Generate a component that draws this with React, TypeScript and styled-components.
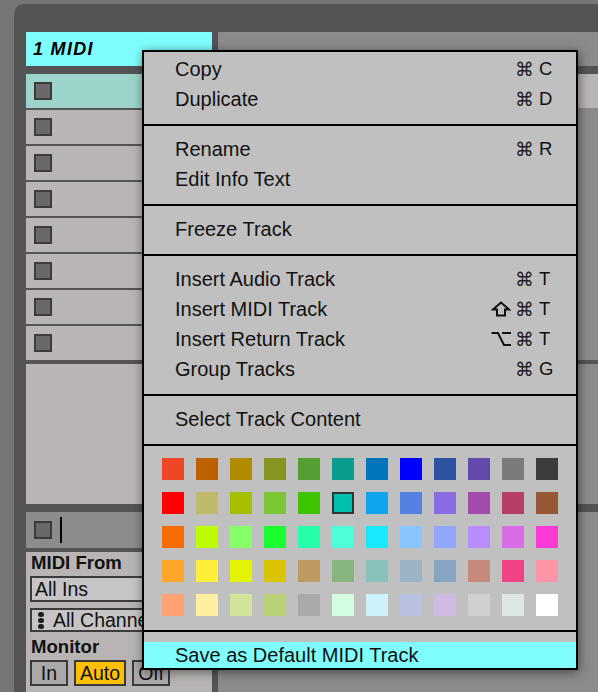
import React from "react";
import styled, { createGlobalStyle } from "styled-components";

const GlobalStyle = createGlobalStyle`
  html, body { margin: 0; padding: 0; background: #767676; }
  body { font-family: "Liberation Sans", Arial, sans-serif; }
  * { box-sizing: border-box; }
`;

const Screen = styled.div`
  position: relative;
  width: 598px;
  height: 692px;
  overflow: hidden;
  background: #767676;
  padding: 4px 0 0 14px;
`;

const Panel = styled.div`
  display: flex;
  gap: 6px;
  height: 100%;
  background: #545454;
  border-top-left-radius: 10px;
  padding: 28px 0 0 12px;
`;

const Column = styled.div<{ $width?: number }>`
  display: flex;
  flex-direction: column;
  ${(p) => (p.$width ? `width: ${p.$width}px; flex: none;` : "flex: 1;")}
`;

const TrackHeader = styled.div<{ $active?: boolean }>`
  height: 34px;
  flex: none;
  margin-bottom: 8px;
  background: ${(p) => (p.$active ? "#80fefe" : "#8b8b8b")};
  color: #000;
  font-weight: bold;
  font-style: italic;
  font-size: 18px;
  letter-spacing: 1.3px;
  line-height: 34px;
  padding-left: 7px;
`;

const SlotList = styled.div`
  display: flex;
  flex-direction: column;
  gap: 2px;
  flex: none;
`;

const Slot = styled.div<{ $selected?: boolean }>`
  height: 34px;
  flex: none;
  display: flex;
  align-items: center;
  padding-left: 8px;
  background: ${(p) => (p.$selected ? "#9dd4ca" : "#b9b5b4")};
`;

const SlotButton = styled.div`
  width: 18px;
  height: 18px;
  border: 2px solid #3b3b3b;
  background: #696969;
`;

const Block = styled.div<{ $h?: number; $tone: string; $top: number }>`
  ${(p) => (p.$h ? `height: ${p.$h}px; flex: none;` : "flex: 1;")}
  margin-top: ${(p) => p.$top}px;
  background: ${(p) => p.$tone};
`;

const StopRow = styled.div`
  height: 36px;
  flex: none;
  margin-top: 8px;
  display: flex;
  align-items: center;
  gap: 8px;
  padding-left: 8px;
  background: #8d8b8b;
`;

const Cursor = styled.div`
  width: 2px;
  height: 26px;
  background: #000;
`;

const IOSection = styled.div`
  flex: 1;
  margin-top: 4px;
  background: #b8b4b4;
  display: flex;
  flex-direction: column;
  align-items: flex-start;
  padding: 2px 0 0 4px;
`;

const IOLabel = styled.div<{ $top: number }>`
  font-weight: bold;
  font-size: 18.6px;
  line-height: 18px;
  height: 18px;
  margin-top: ${(p) => p.$top}px;
  padding-left: 1px;
  color: #111;
`;

const SelectBox = styled.div<{ $h: number; $top: number }>`
  width: 172px;
  height: ${(p) => p.$h}px;
  margin-top: ${(p) => p.$top}px;
  border: 2px solid #3c3c3c;
  background: #c6c4c4;
  display: flex;
  align-items: center;
  gap: 9px;
  padding-left: 3px;
  font-size: 19.5px;
  color: #111;
  white-space: nowrap;
  overflow: hidden;
`;

const ChannelDots = styled.div`
  display: flex;
  flex-direction: column;
  gap: 1px;
  margin-left: 3px;
`;

const Dot = styled.div`
  width: 6px;
  height: 5px;
  border-radius: 3px;
  background: #1e1e1e;
`;

const ButtonRow = styled.div`
  display: flex;
  gap: 6px;
  margin-top: 4px;
`;

const MonButton = styled.div<{ $w: number; $on?: boolean }>`
  width: ${(p) => p.$w}px;
  height: 26px;
  border: 2px solid #3a3a3a;
  background: ${(p) => (p.$on ? "#ffbf05" : "#aaa8a8")};
  font-size: 19.5px;
  line-height: 22px;
  text-align: center;
  color: #111;
`;

/* ---------------- Context menu ---------------- */

const Menu = styled.div`
  position: absolute;
  left: 142px;
  top: 50px;
  width: 436px;
  border: 2px solid #000;
  background: #c0c0c0;
  box-shadow: 1px 2px 10px rgba(0, 0, 0, 0.5);
  display: flex;
  flex-direction: column;
`;

const Section = styled.div<{ $pt: number; $pb: number; $first?: boolean }>`
  padding: ${(p) => p.$pt}px 0 ${(p) => p.$pb}px;
  border-top: ${(p) => (p.$first ? "0" : "2px solid #000")};
  display: flex;
  flex-direction: column;
`;

const Item = styled.div<{ $h?: number; $hl?: boolean }>`
  height: ${(p) => p.$h ?? 30}px;
  display: flex;
  align-items: center;
  justify-content: space-between;
  padding: 0 20px 0 31px;
  font-size: 20px;
  color: #111;
  background: ${(p) => (p.$hl ? "#80fefe" : "transparent")};
`;

const Shortcut = styled.div`
  display: flex;
  align-items: center;
  gap: 1px;
  color: #111;
`;

const Cmd = styled.span`
  font-family: "DejaVu Sans", sans-serif;
  font-size: 19px;
  line-height: 20px;
  color: #222;
`;

const Key = styled.span`
  width: 21px;
  padding-left: 4px;
  font-size: 18.5px;
`;

const ModIcon = styled.svg`
  width: 20px;
  height: 16px;
  margin-right: 3px;
  display: block;
`;

const Palette = styled.div`
  display: grid;
  grid-template-columns: repeat(12, 22px);
  grid-auto-rows: 22px;
  gap: 12px;
  padding: 0 18px;
`;

const Swatch = styled.div<{ $c: string; $sel?: boolean }>`
  background: ${(p) => p.$c};
  border: ${(p) => (p.$sel ? "2px solid #333" : "0")};
`;

const ShiftIcon = () => (
  <ModIcon viewBox="0 0 20 16">
    <path d="M2 8.5 L10 1.5 L18 8.5 H14 V14.5 H6 V8.5 Z" fill="none" stroke="#111" strokeWidth="2" strokeLinejoin="miter" />
  </ModIcon>
);

const OptionIcon = () => (
  <ModIcon viewBox="0 0 20 16">
    <path d="M0.5 2 H7 L13 14 H20" fill="none" stroke="#111" strokeWidth="2" />
    <path d="M11 2 H20" fill="none" stroke="#111" strokeWidth="2" />
  </ModIcon>
);

type MenuItem = { label: string; mod?: "shift" | "option"; key?: string };

const sections: { pt: number; pb: number; items: MenuItem[] }[] = [
  {
    pt: 2,
    pb: 10,
    items: [
      { label: "Copy", key: "C" },
      { label: "Duplicate", key: "D" },
    ],
  },
  {
    pt: 8,
    pb: 10,
    items: [{ label: "Rename", key: "R" }, { label: "Edit Info Text" }],
  },
  { pt: 8, pb: 10, items: [{ label: "Freeze Track" }] },
  {
    pt: 8,
    pb: 10,
    items: [
      { label: "Insert Audio Track", key: "T" },
      { label: "Insert MIDI Track", mod: "shift", key: "T" },
      { label: "Insert Return Track", mod: "option", key: "T" },
      { label: "Group Tracks", key: "G" },
    ],
  },
  { pt: 8, pb: 10, items: [{ label: "Select Track Content" }] },
];

const colors = [
  ["#ee4727", "#bd6100", "#b08b00", "#85951f", "#539f31", "#0a9c8e", "#0074bc", "#0000ff", "#2d52a1", "#624aad", "#7b7b7b", "#3c3c3c"],
  ["#ff0000", "#bfba69", "#a6be00", "#7ac634", "#3dc300", "#00bfaf", "#10a4ee", "#5480e4", "#886ce4", "#a34bad", "#b73d69", "#965735"],
  ["#f66c03", "#bffb00", "#87ff67", "#1aff2f", "#25ffa8", "#4dffd8", "#19e9ff", "#8bc5ff", "#92a7ff", "#b88dff", "#d86ce4", "#ff39d4"],
  ["#ffa529", "#ffef3b", "#e4f400", "#dbc300", "#bd9a61", "#88b47d", "#88c2ba", "#9bb3c4", "#85a5c2", "#c6897b", "#f04284", "#ff94a6"],
  ["#ffa374", "#ffeea0", "#d2e498", "#bad074", "#a9a9a9", "#d4fde1", "#cdf1f8", "#b9c1e3", "#cdbbe4", "#d0d0d0", "#dfe7e5", "#ffffff"],
];

export default function App() {
  return (
    <>
      <GlobalStyle />
      <Screen>
        <Panel>
          <Column $width={186}>
            <TrackHeader $active>1 MIDI</TrackHeader>
            <SlotList>
              {Array.from({ length: 8 }).map((_, i) => (
                <Slot key={i} $selected={i === 0}>
                  <SlotButton />
                </Slot>
              ))}
            </SlotList>
            <Block $h={140} $top={4} $tone="#b9b5b4" />
            <StopRow>
              <SlotButton />
              <Cursor />
            </StopRow>
            <IOSection>
              <IOLabel $top={0}>MIDI From</IOLabel>
              <SelectBox $h={26} $top={4}>All Ins</SelectBox>
              <SelectBox $h={24} $top={6}>
                <ChannelDots>
                  <Dot />
                  <Dot />
                  <Dot />
                </ChannelDots>
                All Channels
              </SelectBox>
              <IOLabel $top={6}>Monitor</IOLabel>
              <ButtonRow>
                <MonButton $w={38}>In</MonButton>
                <MonButton $w={52} $on>
                  Auto
                </MonButton>
                <MonButton $w={38}>Off</MonButton>
              </ButtonRow>
            </IOSection>
          </Column>
          <Column>
            <TrackHeader />
            <Slot />
            <Block $h={252} $top={0} $tone="#8c8b8b" />
            <Block $h={140} $top={4} $tone="#8c8b8b" />
            <Block $top={8} $tone="#8c8b8b" />
          </Column>
        </Panel>

        <Menu>
          {sections.map((s, si) => (
            <Section key={si} $pt={s.pt} $pb={s.pb} $first={si === 0}>
              {s.items.map((it) => (
                <Item key={it.label}>
                  <span>{it.label}</span>
                  {it.key && (
                    <Shortcut>
                      {it.mod === "shift" && <ShiftIcon />}
                      {it.mod === "option" && <OptionIcon />}
                      <Cmd>⌘</Cmd>
                      <Key>{it.key}</Key>
                    </Shortcut>
                  )}
                </Item>
              ))}
            </Section>
          ))}
          <Section $pt={12} $pb={14}>
            <Palette>
              {colors.flatMap((row, r) =>
                row.map((c, ci) => <Swatch key={`${r}-${ci}`} $c={c} $sel={r === 1 && ci === 5} />)
              )}
            </Palette>
          </Section>
          <Section $pt={10} $pb={0}>
            <Item $h={26} $hl>
              <span>Save as Default MIDI Track</span>
            </Item>
          </Section>
        </Menu>
      </Screen>
    </>
  );
}
